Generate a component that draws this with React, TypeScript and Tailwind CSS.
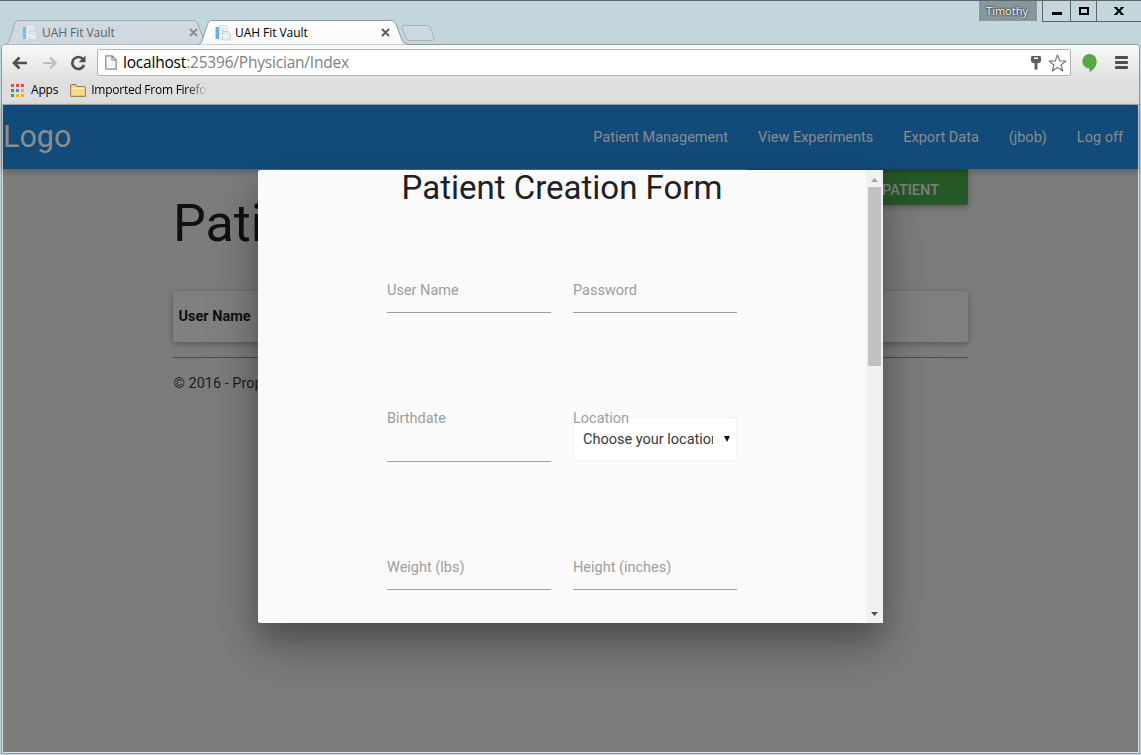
import type { ReactNode } from "react";

function Favicon({ faded }: { faded?: boolean }) {
  return (
    <svg width="16" height="16" viewBox="0 0 16 16" opacity={faded ? 0.75 : 1} className="shrink-0">
      <rect x="1" y="2" width="3" height="12" fill="#6cb2dc" />
      <rect x="0" y="2" width="1" height="12" fill="#b5d6ec" />
      <path d="M4.500 0.500h7l1 1v13h-8z" fill="#eef4f9" stroke="#d5dfe8" />
      <path d="M6 3.500h5M6 5.500h3" stroke="#d3dce4" />
      <path d="M7.500 6.500h6l2 2v6.500h-8z" fill="#e4e9ef" stroke="#c8d0d9" />
      <path d="M6 10.500h6M9 12.500h4" stroke="#ffffff" />
    </svg>
  );
}

function Tab({ active, width }: { active?: boolean; width: string }) {
  const w = active ? 212 : 207;
  const r = active ? 195 : 190;
  return (
    <div className={`relative h-6 shrink-0 ${width} ${active ? "z-10 -ml-[14px]" : ""}`}>
      <svg className="absolute left-0 top-0" width={w} height="25" viewBox={`0 0 ${w} 25`}>
        <defs>
          <linearGradient id="activeTab" x1="0" y1="0" x2="0" y2="1">
            <stop offset="0" stopColor="#ffffff" />
            <stop offset="1" stopColor="#f8f8f8" />
          </linearGradient>
        </defs>
        <path
          d={`M0 24.500 C3 24 3.500 22 4.500 19.500 L9.500 4.500 C10.500 1.500 11.500 0.500 14 0.500 H${r - 2} C${r + 1} 0.500 ${r + 2} 2 ${r + 3} 4.500 L${r + 9} 20 C${r + 10} 23 ${r + 12} 24 ${w} 24.500 Z`}
          fill={active ? "url(#activeTab)" : "#d0d8e0"}
        />
        <path
          d={`M0 24.500 C3 24 3.500 22 4.500 19.500 L9.500 4.500 C10.500 1.500 11.500 0.500 14 0.500 H${r - 2} C${r + 1} 0.500 ${r + 2} 2 ${r + 3} 4.500 L${r + 9} 20 C${r + 10} 23 ${r + 12} 24 ${w} 24.500`}
          fill="none"
          stroke={active ? "#899ba1" : "#9aabb3"}
        />
      </svg>
      <div className={`relative flex h-[26px] items-center ${active ? "pl-[17px] pr-[20px]" : "pl-[17px] pr-[14px]"}`}>
        <Favicon faded={!active} />
        <span className={`ml-[4px] text-[12px] tracking-[-0.05px] ${active ? "text-black" : "text-[#5c6369]"}`}>UAH Fit Vault</span>
        <svg className="-mt-px ml-auto" width="9" height="9" viewBox="0 0 9 9">
          <path d="M1 1l7 7M8 1l-7 7" stroke={active ? "#5a5a5a" : "#848b90"} strokeWidth="1.8" />
        </svg>
      </div>
    </div>
  );
}

function TitleBar() {
  return (
    <div className="flex h-11 items-start border-t border-[#5f626b]">
      <div className="flex pl-[5px] pt-[19px]">
        <Tab width="w-[207px]" />
        <Tab width="w-[212px]" active />
        <svg className="z-10 -ml-[9px] mt-[5px]" width="34" height="17" viewBox="0 0 34 17">
          <path d="M3 0.500H26c2 0 3 1 3.600 2.500l3.200 9.500c.7 2-.3 3-2 3H9c-2 0-3.300-1-4-3L1.200 3C.6 1.500 1.500.5 3 .5z" fill="#cfd8e0" stroke="#a3b3bb" />
        </svg>
      </div>
      <div className="ml-auto flex">
        <div className="mr-[5px] flex h-5 w-[58px] items-center justify-center bg-[#89969a] pr-[2px] text-[11px] text-white [text-shadow:0_0_2px_#222,0_0_2px_#222]">Timothy</div>
        <div className="flex h-[21px] w-[99px] border-b border-l border-[#5f626b]">
          <div className="flex w-[28px] justify-center border-r border-[#5f626b] pt-[11px]">
            <span className="h-[3px] w-[10px] bg-black" />
          </div>
          <div className="flex w-[26px] justify-center border-r border-[#5f626b] pt-[6px]">
            <span className="h-[8px] w-[10px] border-2 border-black" />
          </div>
          <div className="flex flex-1 justify-center pt-[6px]">
            <svg width="10" height="8" viewBox="0 0 10 8">
              <path d="M1.500 0.500l7 7M8.500 0.500l-7 7" stroke="#000" strokeWidth="2" />
              <path d="M0 .5h3.500M6.500 .5H10M0 7.500h3.500M6.500 7.500H10" stroke="#000" />
            </svg>
          </div>
        </div>
      </div>
    </div>
  );
}

function Toolbar() {
  return (
    <div className="flex h-[33px] items-center pl-[9px]">
      <svg width="17" height="14" viewBox="0 0 17 14">
        <path d="M8.500 1.500L3 7l5.500 5.500M3.500 7H16" fill="none" stroke="#505050" strokeWidth="2.700" />
      </svg>
      <svg className="ml-[13px]" width="17" height="14" viewBox="0 0 17 14">
        <path d="M9 1.500L14.500 7 9 12.500M13.500 7H2" fill="none" stroke="#bdbdbd" strokeWidth="2.200" />
      </svg>
      <svg className="ml-[12px]" width="17" height="16" viewBox="0 0 17 16">
        <path d="M13 4.200A6 6 0 1 0 14 10" fill="none" stroke="#505050" strokeWidth="2.700" />
        <path d="M15.500 0.500v6.800H8.700z" fill="#505050" />
      </svg>
      <div className="ml-[10px] flex h-[27px] w-[974px] items-center rounded-[2px] border border-[#b4b4b4] bg-white pl-[7px]">
        <svg width="12" height="15" viewBox="0 0 12 15">
          <path d="M.8.8h6.400l4 4v9.400H.8zM7 1v4h4" fill="#f5f5f5" stroke="#8b8b8b" strokeWidth="1.200" />
        </svg>
        <span className="-mt-px ml-[6px] text-[15.5px] leading-5 tracking-[-0.2px] text-[#808080]">
          <span className="text-black">localhost</span>:25396/Physician/Index
        </span>
        <svg className="ml-auto" width="10" height="14" viewBox="0 0 10 14">
          <path d="M1 0h8q1 0 1 1v4q0 1.500-2 2H6.500v6L5 14l-1.500-1V7H2Q0 6.500 0 5V1q0-1 1-1z" fill="#606060" />
          <rect x="3" y="1.500" width="4" height="1.500" fill="#fff" />
        </svg>
        <svg className="ml-[7px] mr-[3px]" width="19" height="18" viewBox="0 0 19 18">
          <path d="M9.500 1l2.200 5.900 6.200.2-4.900 3.900 1.700 6-5.200-3.400-5.200 3.400 1.700-6L1.100 7.100l6.200-.2z" fill="#fff" stroke="#777" strokeWidth="1.200" strokeLinejoin="round" />
        </svg>
      </div>
      <svg className="ml-[11px]" width="15" height="18" viewBox="0 0 15 18">
        <path d="M7.500 0a7.200 7.200 0 0 0-7.200 7.200c0 4 3.200 7.100 7.200 7.200V18c4-2 7.200-6 7.200-10.800A7.200 7.200 0 0 0 7.500 0z" fill="#55a845" />
      </svg>
      <div className="ml-[18px] flex w-[13px] flex-col gap-[2px]">
        <span className="h-[3px] rounded-[1px] bg-[#505050]" />
        <span className="h-[3px] rounded-[1px] bg-[#505050]" />
        <span className="h-[3px] rounded-[1px] bg-[#505050]" />
      </div>
    </div>
  );
}

const APP_DOTS = [
  "bg-[#f04a3e]", "bg-[#f04a3e]", "bg-[#f04a3e]",
  "bg-[#34a05a]", "bg-[#4285f4]", "bg-[#f4b400]",
  "bg-[#34a05a]", "bg-[#f4b400]", "bg-[#f4b400]",
];

function BookmarksBar() {
  return (
    <div className="-mt-px flex h-[24px] items-center pl-[9px] text-[12px] text-black">
      <div className="grid grid-cols-3 gap-[2px]">
        {APP_DOTS.map((dot, i) => (
          <span key={i} className={`h-[3px] w-[3px] ${dot}`} />
        ))}
      </div>
      <span className="ml-[7px] tracking-[-0.2px]">Apps</span>
      <svg className="ml-[12px]" width="16" height="13" viewBox="0 0 16 13">
        <path d="M.6 11.500V2q0-1.400 1.400-1.400h3.500L7 2.500h7q1.400 0 1.400 1.400v7.600q0 .9-.9.9h-13q-.9 0-.9-.9z" fill="#f9d78b" stroke="#a5824a" strokeWidth="1.100" />
        <path d="M1.500 4.500h13" stroke="#fdedc2" />
      </svg>
      <span className="ml-[5px] w-[117px] overflow-hidden whitespace-nowrap tracking-[-0.25px] [mask-image:linear-gradient(to_right,black_82%,transparent)]">
        Imported From Firefox
      </span>
    </div>
  );
}

function NavBar() {
  return (
    <nav className="relative z-10 flex h-16 shrink-0 items-center justify-between bg-[#124b79] pr-[15px] text-[#8c8c8c] shadow-[0_2px_5px_0_rgba(0,0,0,0.16),0_2px_8px_0_rgba(0,0,0,0.14)]">
      <span className="text-[30.5px]">Logo</span>
      <div className="flex gap-[30px] pt-[2px] text-[14.5px]">
        <span>Patient Management</span>
        <span>View Experiments</span>
        <span>Export Data</span>
        <span>(jbob)</span>
        <span>Log off</span>
      </div>
    </nav>
  );
}

function Page() {
  return (
    <main className="ml-[170px] w-[795px] text-[#101010]">
      <div className="flex h-[122px] items-start justify-between">
        <h1 className="mt-[25px] w-[480px] overflow-hidden whitespace-nowrap text-[52px] leading-[60px]">Patient Management</h1>
        <button className="flex h-9 w-[222px] items-center justify-end whitespace-nowrap rounded-[2px] bg-[#265828] pr-[29px] pt-[7px] text-[14.5px] font-medium text-[#7f7f7f] shadow-[0_2px_5px_0_rgba(0,0,0,0.16),0_2px_8px_0_rgba(0,0,0,0.14)]">
          CREATE NEW PATIENT
        </button>
      </div>
      <div className="flex h-[51px] items-center rounded-[2px] bg-[#808080] pl-[5.5px] text-[14.5px] font-bold shadow-[0_2px_5px_0_rgba(0,0,0,0.16),0_2px_8px_0_rgba(0,0,0,0.14)]">
        User Name
      </div>
      <hr className="mt-[15px] border-0 border-t border-[#4b4b4b]" />
      <p className="mt-[15px] pl-[0.5px] text-[14.5px] leading-[22px] text-[#1c1c1c]">© 2016 - Property of UAH</p>
    </main>
  );
}

function Field({ label, tall, children }: { label: string; tall?: boolean; children?: ReactNode }) {
  return (
    <div className={`relative w-[164px] pt-px ${tall ? "h-14" : "h-[35px]"} ${children ? "" : "border-b border-[#9e9e9e]"}`}>
      {children}
      <label className="relative z-10 block text-[14.5px] leading-6 text-[#9e9e9e]">{label}</label>
    </div>
  );
}

function PatientDialog() {
  return (
    <section className="absolute left-[255px] top-[65px] z-20 flex h-[453px] w-[625px] rounded-[2px] bg-[#fafafa] shadow-[0_16px_28px_0_rgba(0,0,0,0.22),0_25px_55px_0_rgba(0,0,0,0.21)]">
      <div className="flex-1 overflow-hidden">
        <h2 className="text-center text-[33px] leading-9 text-[#212121]">Patient Creation Form</h2>
        <div className="ml-[129px] mt-[72px] flex w-[350px] flex-col gap-[93px]">
          <div className="flex justify-between">
            <Field label="User Name" />
            <Field label="Password" />
          </div>
          <div className="flex justify-between">
            <Field label="Birthdate" tall />
            <Field label="Location" tall>
              <div className="absolute left-0 top-[11px] flex h-11 w-[164px] items-center rounded-[2px] border border-[#f2f2f2] bg-white pl-[9px] text-[14.5px] text-[#3a3a3a]">
                <span className="w-[130px] overflow-hidden whitespace-nowrap pt-[2px]">Choose your location</span>
                <svg className="ml-[11px]" width="6" height="6" viewBox="0 0 6 6">
                  <path d="M0 0h6L3 6z" fill="#111" />
                </svg>
              </div>
            </Field>
          </div>
          <div className="flex justify-between">
            <Field label="Weight (lbs)" />
            <Field label="Height (inches)" />
          </div>
        </div>
      </div>
      <div className="flex w-[17px] flex-col items-center justify-between bg-[#f1f1f1] pb-[7px] pt-[8px]">
        <div className="flex flex-col items-center gap-[5px]">
          <svg width="7" height="4" viewBox="0 0 7 4"><path d="M0 4h7L3.500 0z" fill="#a0a0a0" /></svg>
          <div className="h-[179px] w-[13px] bg-[#c1c1c1]" />
        </div>
        <svg width="7" height="4" viewBox="0 0 7 4"><path d="M0 0h7L3.500 4z" fill="#505050" /></svg>
      </div>
    </section>
  );
}

export default function App() {
  return (
    <div className="flex h-[755px] w-[1141px] flex-col overflow-hidden bg-[#c3d6dc] pb-px pr-px font-['Open_Sans','Noto_Sans',sans-serif]">
      <div className="-mr-px shrink-0">
        <TitleBar />
      </div>
      <div className="ml-px flex flex-1 flex-col rounded-t-[4px] border border-[#8b9ba1] bg-[#dedede]">
        <header className="h-[60px] shrink-0 rounded-t-[3px] border-b border-[#a9a9a9] bg-linear-to-b from-[#f9f9f9] to-[#dedede] to-65%">
          <div className="pt-px">
            <Toolbar />
            <BookmarksBar />
          </div>
        </header>
        <div className="relative mb-px ml-px mr-px flex flex-1 flex-col bg-[#7c7c7c] font-[Roboto,sans-serif]">
          <NavBar />
          <Page />
          <PatientDialog />
        </div>
      </div>
    </div>
  );
}
